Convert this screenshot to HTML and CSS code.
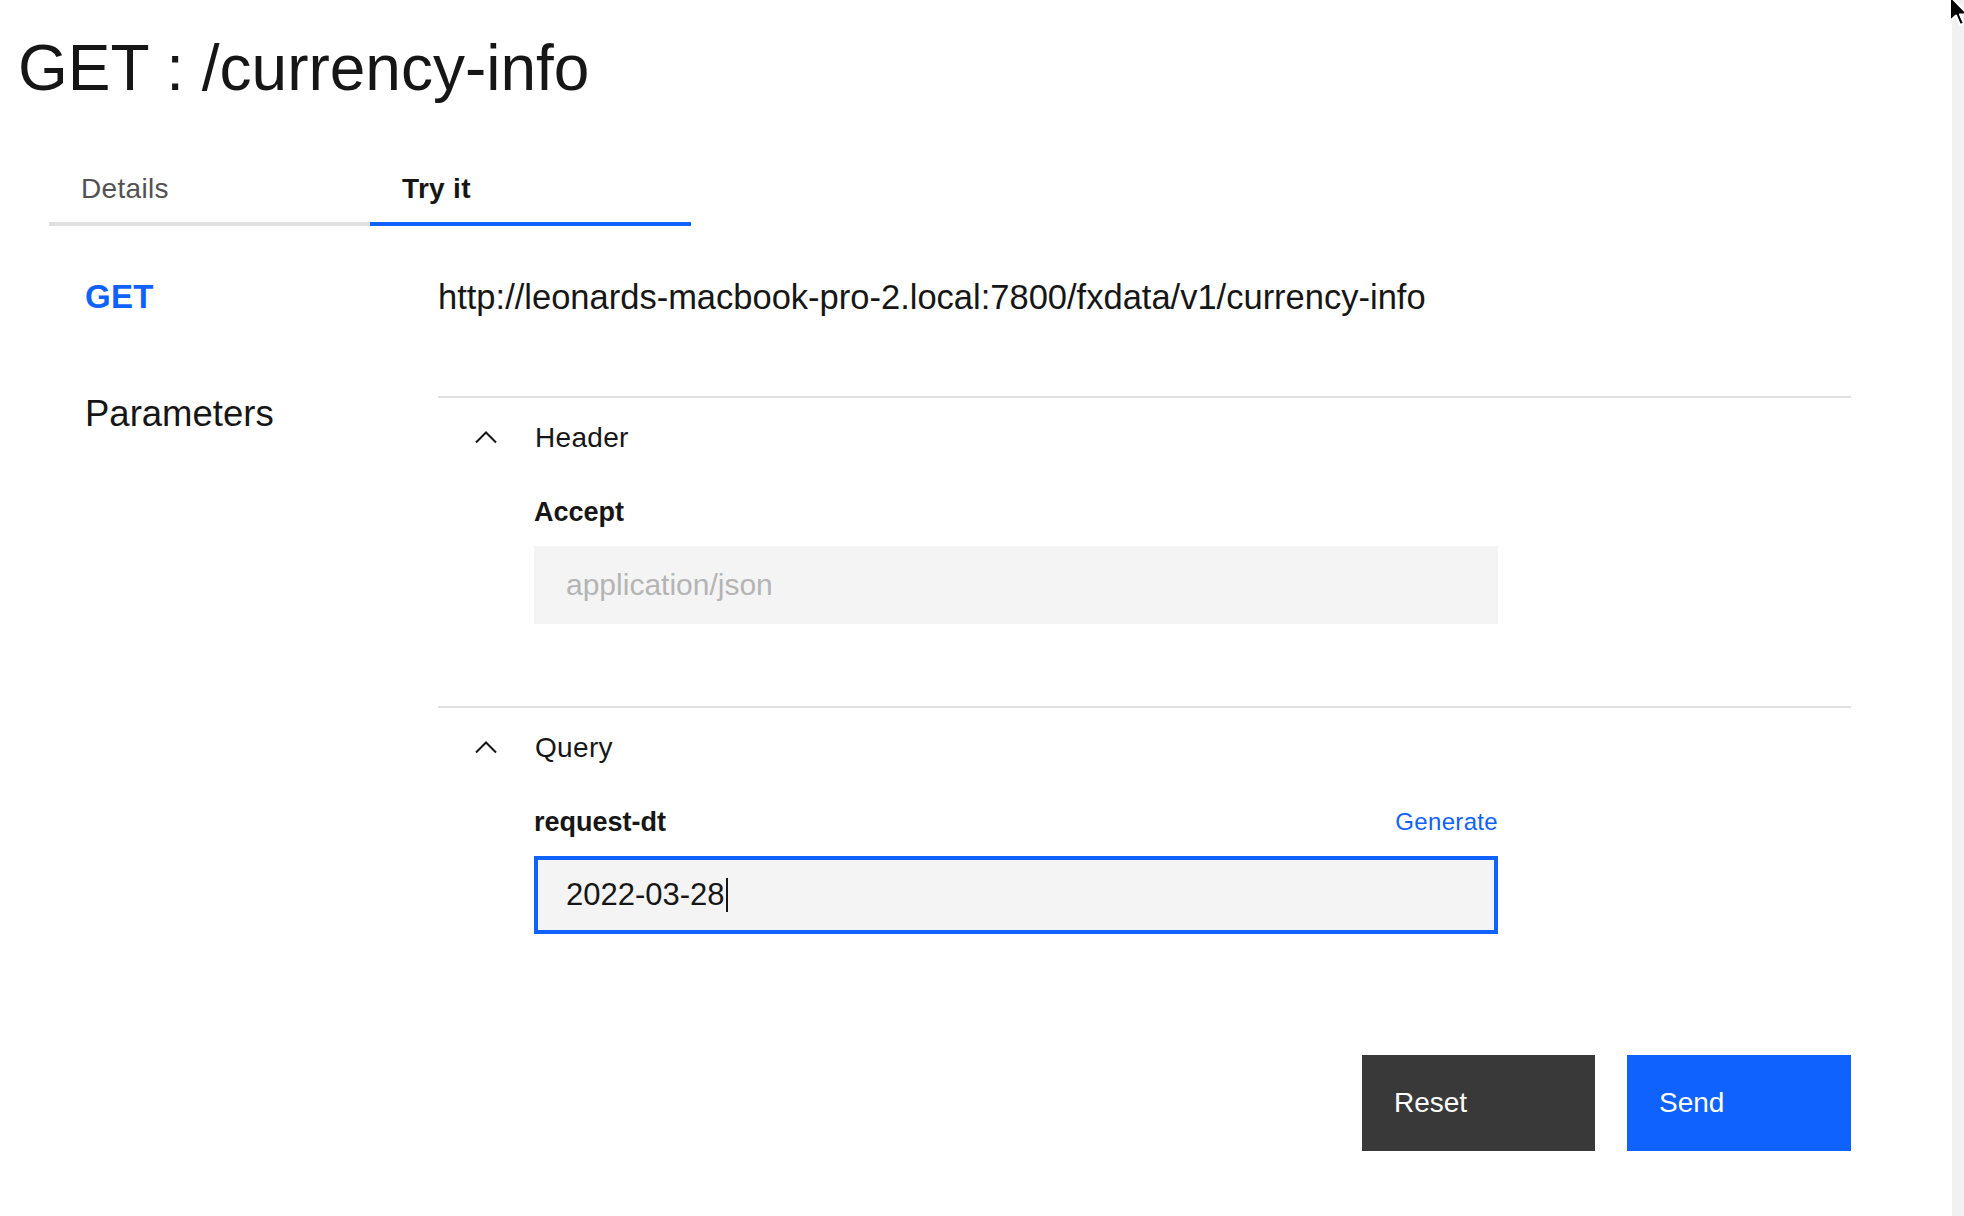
FILE: index.html
```html
<!DOCTYPE html>
<html lang="en">
<head>
<meta charset="utf-8">
<title>GET : /currency-info</title>
<link rel="stylesheet" href="styles.css">
</head>
<body>
<div class="page">
  <h1 class="title">GET : /currency-info</h1>

  <div class="tabs">
    <div class="tab">Details</div>
    <div class="tab tab-active">Try it</div>
  </div>

  <div class="main">
    <div class="method">GET</div>
    <div class="url">http://leonards-macbook-pro-2.local:7800/fxdata/v1/currency-info</div>

    <div class="params-label">Parameters</div>
    <div class="accordion">
      <section class="acc-item">
        <div class="acc-head">
          <svg class="chev" viewBox="0 0 32 32" width="32" height="32"><polyline points="6,20.5 16,10.5 26,20.5" fill="none" stroke="#161616" stroke-width="2"/></svg>
          <span class="acc-title">Header</span>
        </div>
        <div class="acc-body">
          <div class="field-label"><span class="label">Accept</span></div>
          <div class="input"><span class="placeholder">application/json</span></div>
        </div>
      </section>
      <section class="acc-item">
        <div class="acc-head">
          <svg class="chev" viewBox="0 0 32 32" width="32" height="32"><polyline points="6,20.5 16,10.5 26,20.5" fill="none" stroke="#161616" stroke-width="2"/></svg>
          <span class="acc-title">Query</span>
        </div>
        <div class="acc-body acc-body-last">
          <div class="field-label"><span class="label">request-dt</span><span class="link">Generate</span></div>
          <div class="input input-focus"><span class="value">2022-03-28</span><span class="caret"></span></div>
        </div>
      </section>
      <div class="actions">
        <div class="btn btn-reset">Reset</div>
        <div class="btn btn-send">Send</div>
      </div>
    </div>
  </div>
</div>
<div class="scrollbar"></div>
<svg class="cursor" viewBox="0 0 24 36" width="24" height="36"><path d="M3 2 L3 27 L9 21.5 L13 31 L17 29.5 L13 20.5 L21 20.5 Z" fill="#000" stroke="#fff" stroke-width="2" stroke-linejoin="round"/></svg>
</body>
</html>
```

FILE: styles.css
```css
* { box-sizing: border-box; }

html, body {
  margin: 0;
  padding: 0;
  background: #ffffff;
}

body {
  position: relative;
  display: flex;
  min-height: 100vh;
  overflow: hidden;
  font-family: "Liberation Sans", Arial, sans-serif;
  color: #161616;
}

.page {
  flex: 1;
  padding-top: 28px;
}

.scrollbar {
  width: 12px;
  background: #f1f1f1;
  flex: none;
}

.title {
  margin: 0 0 0 18px;
  font-size: 64px;
  line-height: 80px;
  font-weight: 400;
  color: #161616;
}

.tabs {
  display: flex;
  margin: 38px 0 0 49px;
}

.tab {
  width: 321px;
  padding: 25px 32px 15px;
  font-size: 28px;
  line-height: 36px;
  letter-spacing: 0.32px;
  color: #525252;
  border-bottom: 4px solid #e0e0e0;
}

.tab-active {
  color: #161616;
  font-weight: 700;
  border-bottom-color: #0f62fe;
}

.main {
  display: grid;
  grid-template-columns: 353px 1413px;
  row-gap: 75px;
  margin: 47px 0 0 85px;
}

.method {
  font-size: 33px;
  line-height: 48px;
  font-weight: 700;
  color: #0f62fe;
  letter-spacing: 0.3px;
}

.url {
  font-size: 34.5px;
  line-height: 48px;
  color: #161616;
}

.params-label {
  font-size: 36.5px;
  line-height: 36px;
  color: #161616;
}

.acc-item {
  border-top: 2px solid #e0e0e0;
}

.acc-head {
  height: 80px;
  display: flex;
  align-items: center;
}

.chev {
  margin-left: 32px;
  flex: none;
}

.acc-title {
  margin-left: 33px;
  font-size: 28px;
  line-height: 36px;
  letter-spacing: 0.32px;
}

.acc-body {
  padding: 16px 353px 82px 96px;
}

.acc-body-last {
  padding-bottom: 0;
}

.field-label {
  display: flex;
  justify-content: space-between;
  align-items: center;
  height: 36px;
  margin-bottom: 16px;
}

.label {
  font-size: 27px;
  font-weight: 700;
  color: #161616;
}

.link {
  font-size: 24px;
  letter-spacing: 0.32px;
  color: #0f62fe;
}

.input {
  height: 78px;
  background: #f4f4f4;
  padding-left: 32px;
  display: flex;
  align-items: center;
  font-size: 30px;
}

.placeholder {
  color: #b4b4b4;
}

.input-focus {
  border: 4px solid #0f62fe;
  padding-left: 28px;
  font-size: 31px;
}

.value {
  color: #161616;
}

.caret {
  display: inline-block;
  width: 2px;
  height: 34px;
  background: #161616;
  margin-left: 1px;
}

.actions {
  display: flex;
  justify-content: flex-end;
  gap: 32px;
  margin-top: 121px;
}

.btn {
  height: 96px;
  padding-left: 32px;
  display: flex;
  align-items: center;
  font-size: 28px;
  color: #ffffff;
}

.btn-reset {
  width: 233px;
  background: #393939;
}

.btn-send {
  width: 224px;
  background: #0f62fe;
}

.cursor {
  position: absolute;
  top: -6px;
  left: 1947px;
}
```
